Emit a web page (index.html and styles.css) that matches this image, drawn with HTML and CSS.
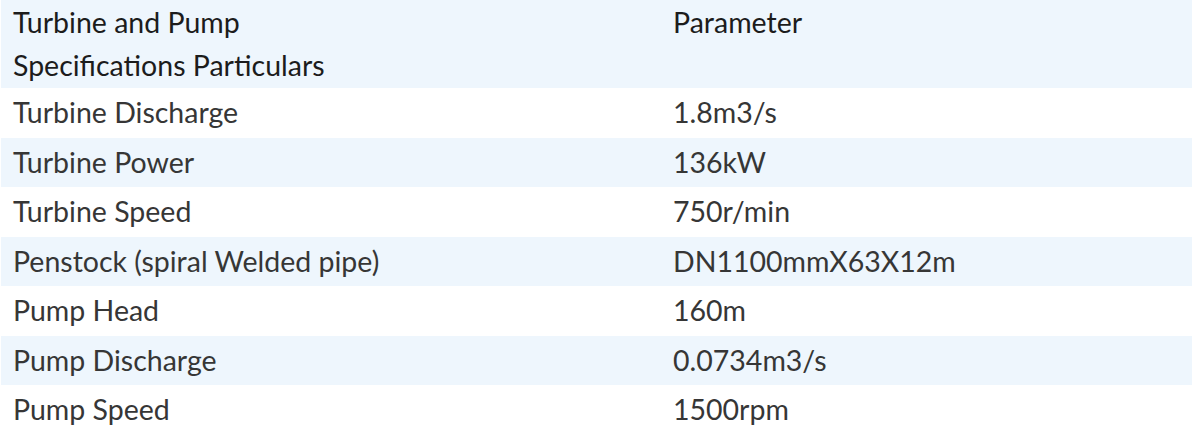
FILE: index.html
```html
<!DOCTYPE html>
<html lang="en">
<head>
<meta charset="utf-8">
<title>Turbine and Pump Specifications</title>
<link rel="stylesheet" href="styles.css">
</head>
<body>
<table class="spec">
  <colgroup><col class="col-name"><col class="col-value"></colgroup>
  <thead>
    <tr class="head"><th>Turbine and Pump<br>Specifications Particulars</th><th>Parameter</th></tr>
  </thead>
  <tbody>
    <tr><td>Turbine Discharge</td><td>1.8m3/s</td></tr>
    <tr class="alt"><td>Turbine Power</td><td>136kW</td></tr>
    <tr><td>Turbine Speed</td><td>750r/min</td></tr>
    <tr class="alt"><td>Penstock (spiral Welded pipe)</td><td>DN1100mmX63X12m</td></tr>
    <tr><td>Pump Head</td><td>160m</td></tr>
    <tr class="alt"><td>Pump Discharge</td><td>0.0734m3/s</td></tr>
    <tr><td>Pump Speed</td><td>1500rpm</td></tr>
  </tbody>
</table>
</body>
</html>
```
FILE: styles.css
```css
html, body {
  margin: 0;
  padding: 0;
  background: #ffffff;
}
body {
  padding-left: 1px;
  font-family: "Lato", "Noto Sans", sans-serif;
}
.spec {
  width: 1191px;
  border-collapse: collapse;
  table-layout: fixed;
}
.col-name { width: 660px; }
.spec th,
.spec td {
  text-align: left;
  vertical-align: top;
  padding: 0 12px;
  font-size: 28.5px;
  white-space: nowrap;
}
.spec th {
  font-weight: 400;
  color: #1c1c1c;
  line-height: 43px;
  height: 88px;
  padding-top: 1px;
  box-sizing: border-box;
}
.spec td {
  font-weight: 400;
  color: #363636;
  height: 49.5px;
  line-height: 49.5px;
}
.head,
.alt {
  background: #eef6fd;
}
```
